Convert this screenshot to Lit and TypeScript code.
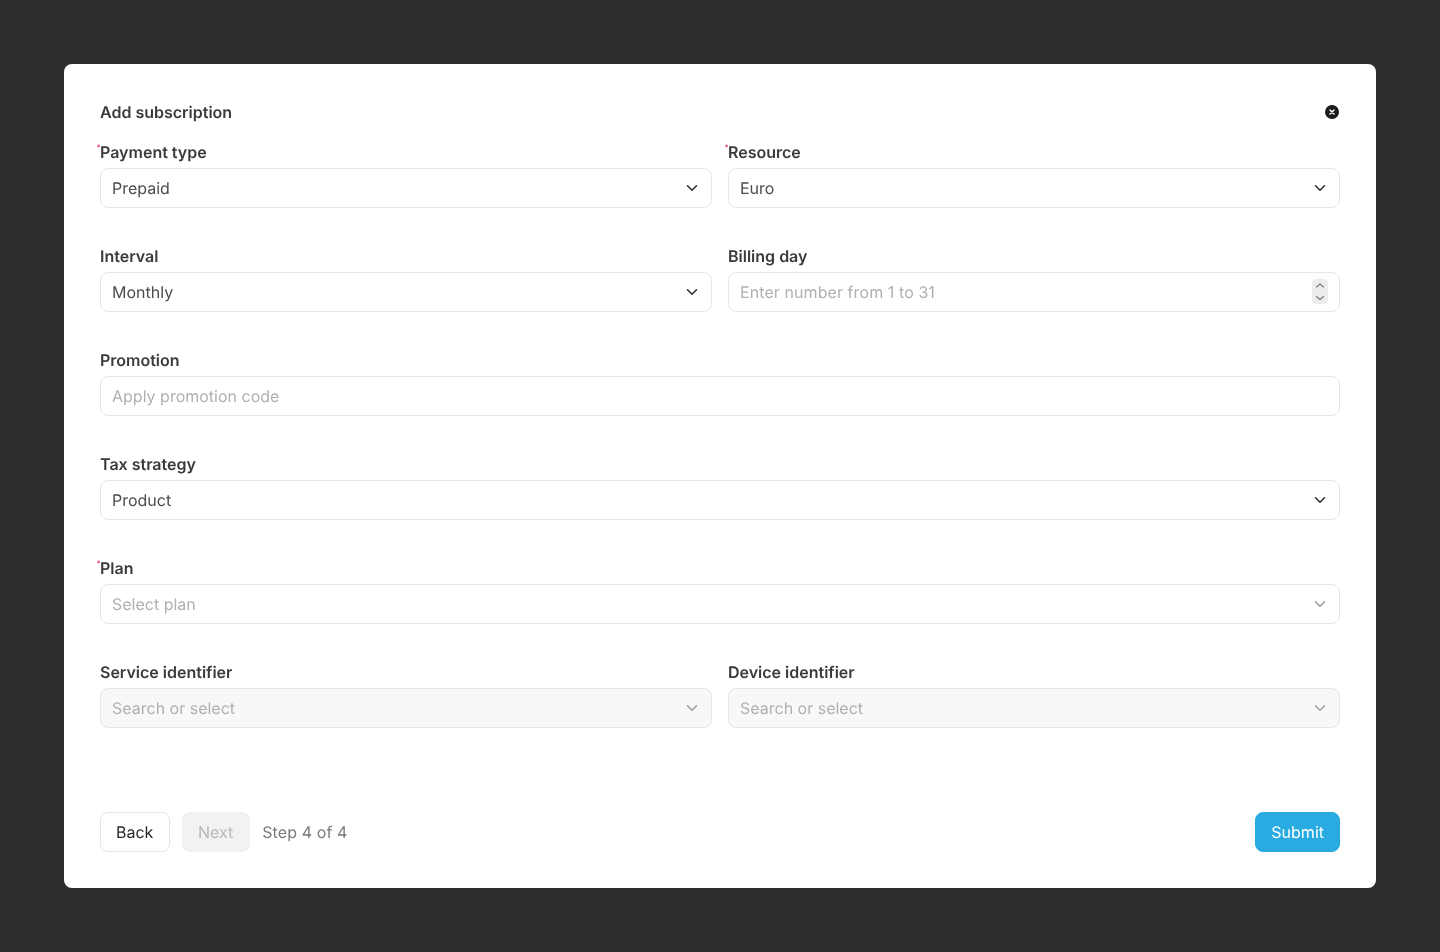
import { LitElement, html, css, svg } from "lit";
import { customElement } from "lit/decorators.js";

const chevron = (cls: string) => html`<svg class="chev ${cls}" width="12" height="8" viewBox="0 0 12 8" fill="none"><path d="M1.5 1.8 6 6.2l4.5-4.4" stroke="currentColor" stroke-width="1.5" stroke-linecap="round" stroke-linejoin="round"/></svg>`;

@customElement("app-root")
export class AppRoot extends LitElement {
  static styles = css`
    :host { display: block; }
    * { box-sizing: border-box; }
    .page {
      min-height: 952px; background: #2d2d2d; padding: 64px;
      font-family: Inter, "Liberation Sans", sans-serif; font-size: 16px; line-height: 24px; color: #3a3a3a;
      text-rendering: geometricPrecision;
    }
    .card { background: #fff; border-radius: 8px; padding: 36px; height: 824px; display: flex; flex-direction: column; will-change: transform; }
    .head { display: flex; justify-content: space-between; align-items: center; height: 24px; margin-bottom: 16px; }
    .title { font-weight: 600; font-size: 16px; color: #3a3a3a; }
    .close { display: block; margin-right: 1px; }
    .form { display: grid; grid-template-columns: 1fr 1fr; column-gap: 16px; row-gap: 36px; }
    .full { grid-column: 1 / -1; }
    .field { display: flex; flex-direction: column; gap: 4px; }
    .label { position: relative; font-weight: 600; font-size: 16px; height: 24px; color: #3a3a3a; }
    .req { position: absolute; left: -3.5px; top: 2px; font-size: 8px; line-height: 10px; font-weight: 500; color: #e0455f; }
    .control {
      height: 40px; border: 1px solid #e6e6e6; border-radius: 8px; background: #fff;
      display: flex; align-items: center; justify-content: space-between; padding: 0 13px 0 11px; color: #4d4d4d;
    }
    .control.placeholder { color: #b0b0b0; }
    .control.disabled { background: #f8f8f8; }
    .numeric { letter-spacing: 0.08px; }
    .chev { color: #2a2a2a; display: block; }
    .chev.muted { color: #9c9c9c; }
    .spin { width: 16px; height: 25px; margin: -1px -2px 0 0; border-radius: 4px; background: #ececec; display: block; }
    .foot { margin-top: 84px; display: flex; align-items: center; gap: 12px; }
    .btn { height: 40px; border-radius: 8px; padding: 0 16px; display: flex; align-items: center; border: 1px solid transparent; }
    .back { border-color: #e6e6e6; color: #2a2a2a; background: #fff; padding: 0 16px 0 15px; }
    .next { background: #f2f2f2; color: #b8b8b8; border-color: #f2f2f2; padding: 0 16px 0 14.5px; }
    .step { color: #7a7a7a; letter-spacing: 0.1px; }
    .submit { margin-left: auto; background: #29abe2; color: #fff; border-color: #29abe2; padding: 0 15px; }
  `;

  private field(label: string, value: string, o: { req?: boolean; ph?: boolean; dis?: boolean; full?: boolean; trail?: "chev" | "spin" | "none" } = {}) {
    const trail = o.trail ?? "chev";
    return html`<div class="field ${o.full ? "full" : ""}">
      <div class="label">${o.req ? html`<span class="req">*</span>` : ""}${label}</div>
      <div class="control ${o.ph ? "placeholder" : ""} ${o.dis ? "disabled" : ""}">
        <span class=${trail === "spin" ? "numeric" : ""}>${value}</span>
        ${trail === "chev" ? chevron(o.ph ? "muted" : "") : ""}
        ${trail === "spin"
          ? html`<svg class="spin" viewBox="0 0 16 25" fill="none" stroke="#777" stroke-width="1.1" stroke-linecap="round" stroke-linejoin="round">${svg`<path d="M4.5 8 8 5 11.5 8"/><path d="M4.5 17.5 8 20.5 11.5 17.5"/>`}</svg>`
          : ""}
      </div>
    </div>`;
  }

  render() {
    return html`<div class="page"><div class="card">
      <div class="head">
        <div class="title">Add subscription</div>
        <svg class="close" width="14" height="14" viewBox="0 0 14 14"><circle cx="7" cy="7" r="7" fill="#1c1c1c"/><path d="M5 5l4 4M9 5l-4 4" stroke="#fff" stroke-width="1.5" stroke-linecap="round"/></svg>
      </div>
      <div class="form">
        ${this.field("Payment type", "Prepaid", { req: true })}
        ${this.field("Resource", "Euro", { req: true })}
        ${this.field("Interval", "Monthly")}
        ${this.field("Billing day", "Enter number from 1 to 31", { ph: true, trail: "spin" })}
        ${this.field("Promotion", "Apply promotion code", { ph: true, full: true, trail: "none" })}
        ${this.field("Tax strategy", "Product", { full: true })}
        ${this.field("Plan", "Select plan", { req: true, ph: true, full: true })}
        ${this.field("Service identifier", "Search or select", { ph: true, dis: true })}
        ${this.field("Device identifier", "Search or select", { ph: true, dis: true })}
      </div>
      <div class="foot">
        <div class="btn back">Back</div>
        <div class="btn next">Next</div>
        <div class="step">Step 4 of 4</div>
        <div class="btn submit">Submit</div>
      </div>
    </div></div>`;
  }
}
